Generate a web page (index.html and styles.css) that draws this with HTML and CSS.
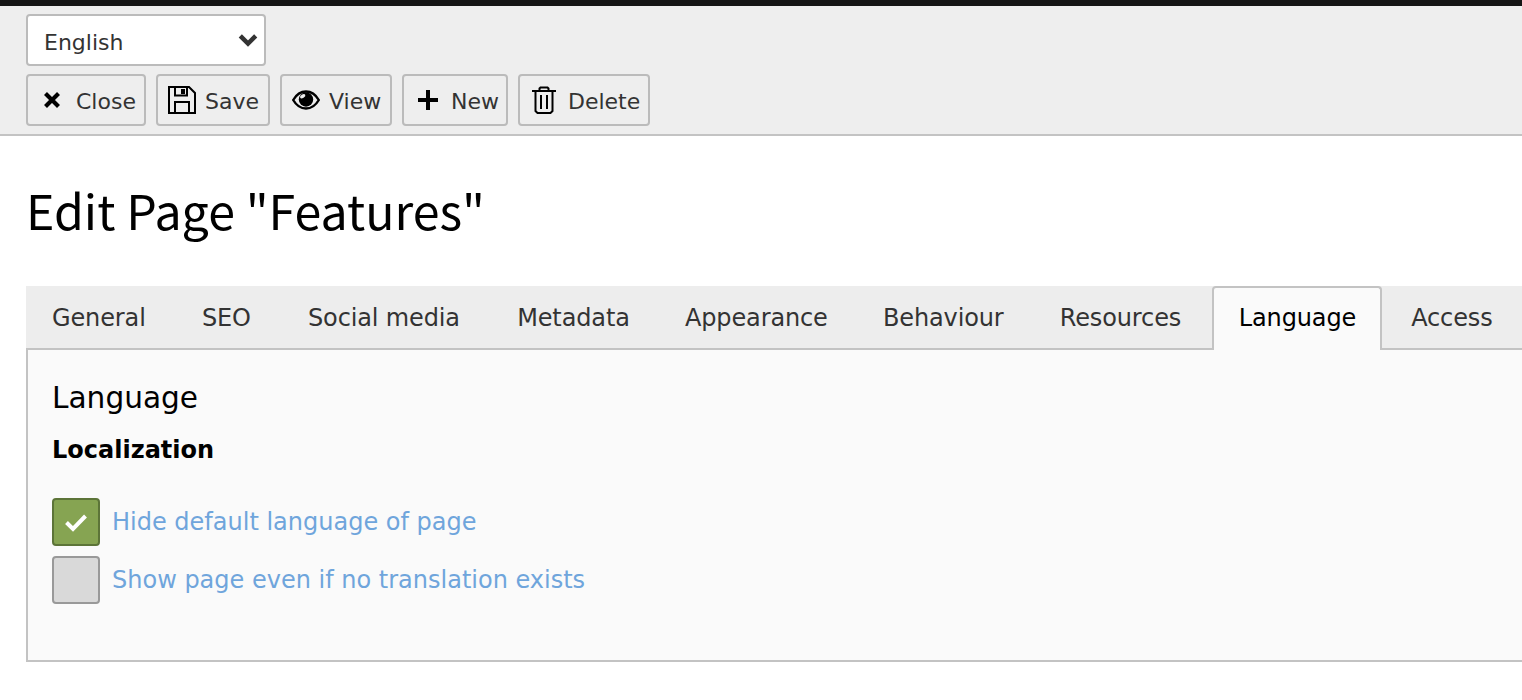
FILE: index.html
```html
<!DOCTYPE html>
<html lang="en">
<head>
<meta charset="utf-8">
<title>Edit Page "Features"</title>
<link rel="stylesheet" href="styles.css">
</head>
<body>
<header class="docheader">
  <div class="select-row">
    <div class="select">
      <span class="select-text">English</span>
      <svg class="chevron" width="20" height="14" viewBox="0 0 20 14"><path d="M2.300 2.800 10 10.500l7.700-7.700" fill="none" stroke="#333" stroke-width="4.500"/></svg>
    </div>
  </div>
  <div class="buttons">
    <button class="btn btn-close">
      <svg width="20" height="20" viewBox="0 0 20 20"><path d="M3.500 3.500l13 13M16.500 3.500l-13 13" stroke="#000" stroke-width="4.200" fill="none"/></svg>
      <span class="btn-text">Close</span>
    </button>
    <button class="btn btn-save">
      <svg width="28" height="28" viewBox="0 0 28 28" fill="none" stroke="#000" stroke-width="2"><path d="M1 1h20l6 6v20H1z"/><path d="M7 1v8.500h12V1"/><path d="M13 3v5h4V3z" fill="#000" stroke="none"/><path d="M7 27V16h14v11"/></svg>
      <span class="btn-text">Save</span>
    </button>
    <button class="btn btn-view">
      <svg width="28" height="20" viewBox="0 0 28 20"><path d="M1.200 10C4.500 4.300 9 1.500 14 1.500S23.500 4.300 26.800 10C23.500 15.700 19 18.500 14 18.500S4.500 15.700 1.200 10z" fill="none" stroke="#000" stroke-width="2.400"/><circle cx="14" cy="9.500" r="7.200" fill="#000"/><ellipse cx="10.700" cy="6.300" rx="2.900" ry="1.700" transform="rotate(-30 10.700 6.300)" fill="#eee"/></svg>
      <span class="btn-text">View</span>
    </button>
    <button class="btn btn-new">
      <svg width="22" height="22" viewBox="0 0 22 22"><path d="M11 1v20M1 11h20" stroke="#000" stroke-width="4" fill="none"/></svg>
      <span class="btn-text">New</span>
    </button>
    <button class="btn btn-delete">
      <svg width="24" height="28" viewBox="0 0 24 28" fill="none" stroke="#000" stroke-width="2"><path d="M0 5h24"/><path d="M7.500 5V2.500L8.500 1.500h7l1 1V5"/><path d="M3.500 5v20l2 2h13l2-2V5"/><path d="M9 9v14M15 9v14"/></svg>
      <span class="btn-text">Delete</span>
    </button>
  </div>
</header>
<main class="content">
  <h1 class="title">Edit Page "Features"</h1>
  <nav class="tabs">
    <a class="tab">General</a>
    <a class="tab">SEO</a>
    <a class="tab tab-social">Social media</a>
    <a class="tab tab-meta">Metadata</a>
    <a class="tab tab-appearance">Appearance</a>
    <a class="tab tab-behaviour">Behaviour</a>
    <a class="tab tab-resources">Resources</a>
    <a class="tab tab-active">Language</a>
    <a class="tab tab-last">Access</a>
  </nav>
  <section class="panel">
    <h2 class="panel-title">Language</h2>
    <h3 class="panel-sub">Localization</h3>
    <div class="check-row">
      <span class="box box-on">
        <svg width="24" height="20" viewBox="0 0 24 20"><path d="M2.500 10.500l6.500 6.500L21.500 4" fill="none" stroke="#fff" stroke-width="4"/></svg>
      </span>
      <span class="check-label">Hide default language of page</span>
    </div>
    <div class="check-row">
      <span class="box"></span>
      <span class="check-label">Show page even if no translation exists</span>
    </div>
  </section>
</main>
</body>
</html>
```
FILE: styles.css
```css
* { box-sizing: border-box; }
html, body { margin: 0; padding: 0; overflow: hidden; height: 700px; background: #fff; }
body { font-family: "DejaVu Sans", Verdana, sans-serif; font-size: 24px; color: #333; }

.docheader {
  height: 136px;
  background: #eee;
  border-top: 6px solid #151515;
  border-bottom: 2px solid #c3c3c3;
  padding: 8px 0 0 26px;
}
.select-row { display: flex; }
.select {
  width: 240px;
  height: 52px;
  display: flex;
  align-items: center;
  justify-content: space-between;
  padding: 0 6px 0 16px;
  background: #fff;
  border: 2px solid #bbb;
  border-radius: 4px;
}
.select-text { font-size: 22px; line-height: 26px; padding-top: 5px; }
.buttons { display: flex; gap: 10px; margin-top: 8px; }
.btn {
  height: 52px;
  display: flex;
  align-items: center;
  background: #eee;
  border: 2px solid #bbb;
  border-radius: 4px;
  font: inherit;
  color: #333;
  padding: 0;
}
.btn-text { font-size: 22px; line-height: 26px; padding-top: 4px; }
.btn-close { width: 120px; padding-left: 14px; gap: 14px; }
.btn-save { width: 114px; padding-left: 10px; gap: 9px; }
.btn-view { width: 112px; padding-left: 10px; gap: 9px; }
.btn-new { width: 106px; padding-left: 13px; gap: 12px; }
.btn-delete { width: 132px; padding-left: 12px; gap: 12px; }

.content { padding: 0 0 0 26px; }
.title {
  margin: 0;
  padding-top: 43px;
  height: 150px;
  font-family: "Noto Sans CJK SC", "Open Sans", sans-serif;
  font-weight: 400;
  font-size: 48.300px;
  line-height: 60px;
  color: #000;
}
.tabs {
  display: flex;
  height: 64px;
  background: #ededed;
  position: relative;
  z-index: 1;
  margin-bottom: -1px;
  white-space: nowrap;
  letter-spacing: -0.130px;
}
.tab {
  display: flex;
  align-items: center;
  padding: 2px 28.100px 0;
  color: #333;
  border-bottom: 2px solid #c3c3c3;
  height: 64px;
}
.tab:first-child { padding-left: 26px; }
.tab-social { padding-left: 29.100px; }
.tab-meta { padding-left: 29.100px; }
.tab-appearance { padding-left: 27.100px; }
.tab-behaviour { padding-left: 27.100px; }
.tab-resources { padding-right: 30.600px; }
.tab-active {
  background: #fafafa;
  color: #000;
  border: 2px solid #c3c3c3;
  border-bottom: 0;
  border-radius: 4px 4px 0 0;
  padding: 0 24px 2px 25px;
}
.tab-last { flex: 1; padding-left: 29px; }
.panel {
  height: 313px;
  background: #fafafa;
  border: 2px solid #c3c3c3;
  border-top: 0;
  border-right: 0;
  padding: 0 0 0 24px;
}
.panel-title {
  margin: 0;
  padding-top: 31px;
  font-weight: 400;
  font-size: 29.600px;
  line-height: 36px;
  color: #000;
}
.panel-sub {
  margin: 18px 0 0;
  font-size: 24px;
  line-height: 32px;
  font-weight: 700;
  color: #000;
}
.check-row {
  display: flex;
  align-items: center;
  gap: 12px;
  margin-top: 10px;
  height: 48px;
}
.panel-sub + .check-row { margin-top: 32px; }
.box {
  width: 48px;
  height: 48px;
  display: flex;
  align-items: center;
  justify-content: center;
  background: #d9d9d9;
  border: 2px solid #999;
  border-radius: 4px;
}
.box-on { background: #86a452; border-color: #5c7438; }
.check-label { color: #6fa5dc; }
```
